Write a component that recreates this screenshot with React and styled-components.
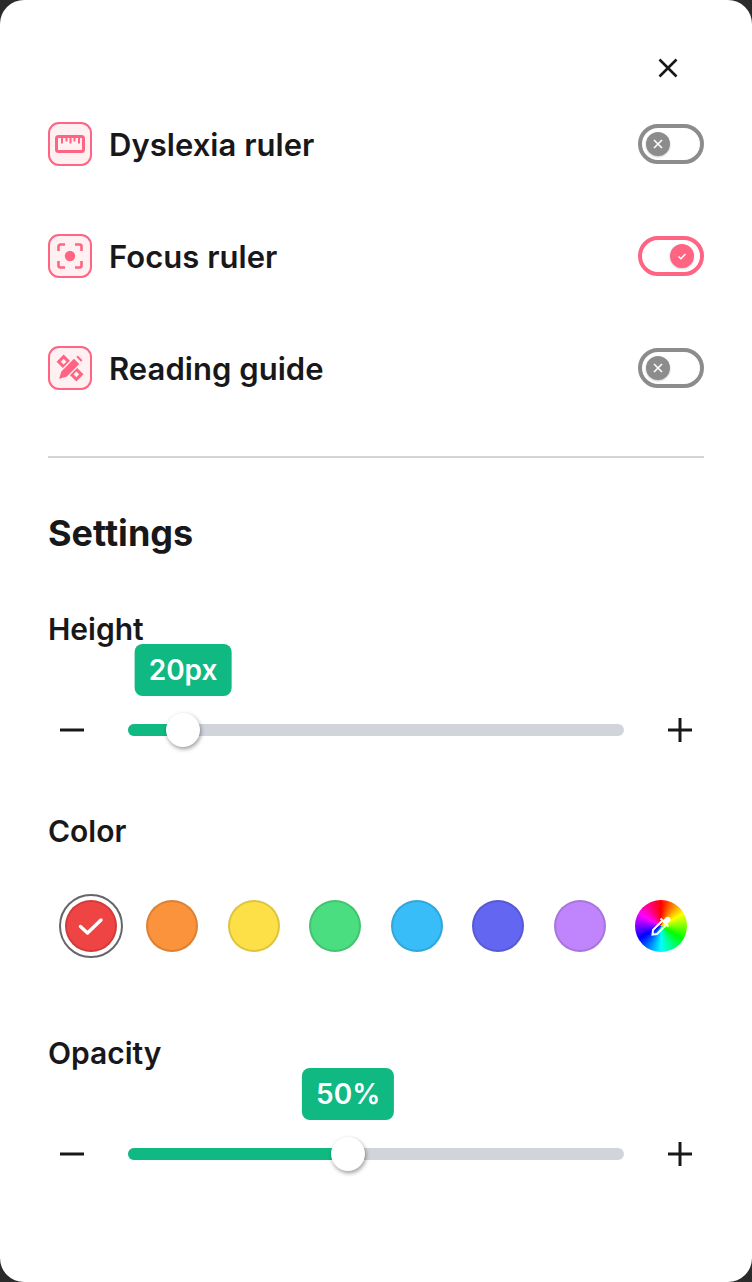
import React from 'react'
import styled, { createGlobalStyle } from 'styled-components'

const Global = createGlobalStyle`
  html, body {
    margin: 0;
    padding: 0;
    background: #2b2b2b;
  }
  body {
    font-family: Inter, "Liberation Sans", sans-serif;
    color: #18181b;
  }
`

const Panel = styled.div`
  width: 752px;
  height: 1282px;
  box-sizing: border-box;
  background: #fff;
  border-radius: 24px;
  padding: 44px 48px 0;
  overflow: hidden;
`

const CloseRow = styled.div`
  display: flex;
  justify-content: flex-end;
  height: 44px;
  padding-right: 14px;
`

const CloseButton = styled.button`
  width: 44px;
  height: 48px;
  padding: 0;
  border: 0;
  background: none;
  display: flex;
  align-items: center;
  justify-content: center;
  color: #18181b;
`

const FeatureRow = styled.div`
  height: 112px;
  display: flex;
  align-items: center;
`

const IconBox = styled.div`
  width: 44px;
  height: 44px;
  box-sizing: border-box;
  border: 2px solid #ff6482;
  border-radius: 11px;
  background: #fff0f2;
  color: #ff6482;
  display: flex;
  align-items: center;
  justify-content: center;
`

const FeatureLabel = styled.span`
  margin-left: 17px;
  flex: 1;
  font-size: 31px;
  font-weight: 600;
  letter-spacing: 0.04px;
`

const Toggle = styled.div`
  width: 66px;
  height: 40px;
  box-sizing: border-box;
  border: 4px solid ${p => (p.$on ? '#ff6482' : '#8c8c8c')};
  border-radius: 20px;
  padding: 4px 6px 4px 4px;
  background: #fff;
  display: flex;
  justify-content: ${p => (p.$on ? 'flex-end' : 'flex-start')};
`

const Knob = styled.div`
  width: 24px;
  height: 24px;
  border-radius: 50%;
  background: ${p => (p.$on ? '#ff6482' : '#8c8c8c')};
  box-shadow: 0 1px 2px rgba(0, 0, 0, 0.2);
  display: flex;
  align-items: center;
  justify-content: center;
  color: #fff;
`

const Divider = styled.hr`
  margin: 32px 0 0;
  border: 0;
  height: 2px;
  background: #d4d4d8;
`

const Heading = styled.h2`
  margin: 53px 0 0;
  font-size: 36px;
  line-height: 44px;
  font-weight: 700;
`

const SectionLabel = styled.div`
  margin-top: ${p => p.$top}px;
  font-size: 30px;
  line-height: 36px;
  font-weight: 600;
`

const SliderRow = styled.div`
  margin-top: 65px;
  height: 36px;
  display: flex;
  align-items: center;
  gap: 32px;
`

const StepButton = styled.button`
  width: 48px;
  height: 36px;
  padding: 0;
  border: 0;
  background: none;
  color: #18181b;
  display: flex;
  align-items: center;
  justify-content: center;
`

const Track = styled.div`
  position: relative;
  flex: 1;
  height: 12px;
  border-radius: 6px;
  background: #d1d5db;
`

const Fill = styled.div`
  height: 100%;
  border-radius: 6px;
  background: #10b981;
`

const Thumb = styled.div`
  position: absolute;
  top: -11px;
  width: 34px;
  height: 34px;
  margin-left: -17px;
  border-radius: 50%;
  background: #fff;
  box-shadow: 1px 2px 4px rgba(0, 0, 0, 0.4);
`

const Bubble = styled.div`
  position: absolute;
  bottom: 40px;
  transform: translateX(-50%);
  height: 52px;
  padding: 0 14px;
  border-radius: 8px;
  background: #10b981;
  color: #fff;
  font-size: 28px;
  font-weight: 600;
  line-height: 52px;
  white-space: nowrap;
`

const Swatches = styled.div`
  margin-top: 45px;
  padding: 0 17px;
  display: flex;
  justify-content: space-between;
  align-items: center;
  height: 64px;
`

const Swatch = styled.div`
  width: 52px;
  height: 52px;
  flex: none;
  position: relative;
  border-radius: 50%;
  box-sizing: border-box;
  background: ${p => p.$color};
  border: 2px solid rgba(0, 0, 0, 0.12);
  display: flex;
  align-items: center;
  justify-content: center;
  color: #fff;
  ${p => p.$selected && `
    &::after {
      content: '';
      position: absolute;
      inset: -8px;
      border: 2px solid #666;
      border-radius: 50%;
    }
  `}
`

const Wheel = styled.div`
  width: 52px;
  height: 52px;
  flex: none;
  border-radius: 50%;
  background: conic-gradient(#f00, #ff0 60deg, #0f0 120deg, #0ff 180deg, #00f 240deg, #f0f 300deg, #f00);
  display: flex;
  align-items: center;
  justify-content: center;
  color: #fff;
`

const CloseIcon = () => (
  <svg width="24" height="24" viewBox="0 0 24 24" fill="none" stroke="currentColor" strokeWidth="2.6">
    <path d="M3.5 3.5L20.5 20.5M20.5 3.5L3.5 20.5" />
  </svg>
)

const RulerIcon = () => (
  <svg width="30" height="18" viewBox="0 0 30 18" fill="none" stroke="currentColor" strokeWidth="3">
    <rect x="1.5" y="1.5" width="27" height="15" rx="2" />
    <path d="M7 1v7.5M11.5 1v5.5M15.5 1v7.5M19.5 1v5.5M24 1v7.5" strokeWidth="2" />
  </svg>
)

const FocusIcon = () => (
  <svg width="26" height="26" viewBox="0 0 26 26" fill="none" stroke="currentColor" strokeWidth="2.6">
    <path d="M8 1.5H3.5a2 2 0 0 0-2 2V8M18 1.5h4.5a2 2 0 0 1 2 2V8M8 24.5H3.5a2 2 0 0 1-2-2V18M18 24.5h4.5a2 2 0 0 0 2-2V18" />
    <circle cx="13" cy="13" r="5.2" fill="currentColor" stroke="none" />
  </svg>
)

// ruler runs top-left to bottom-right, pencil crosses it with its tip at bottom-left
const GuideIcon = () => (
  <svg width="28" height="28" viewBox="0 0 28 28">
    <g transform="rotate(-45 14 14)" fill="currentColor">
      <path fillRule="evenodd" d="M9 0h10v28H9z M12 3v4h4V3z M12 21v4h4v-4z" />
    </g>
    <g transform="rotate(45 14 14)" fill="currentColor" stroke="#fff0f2" strokeWidth="1.4">
      <path d="M10 -1h8v3.4h-8z" />
      <path d="M9.6 4h8.8v18.5L14 31 9.6 22.5z" />
    </g>
  </svg>
)

const CrossMark = () => (
  <svg width="12" height="12" viewBox="0 0 12 12" fill="none" stroke="currentColor" strokeWidth="1.6">
    <path d="M2 2l8 8M10 2l-8 8" />
  </svg>
)

const TickMark = () => (
  <svg width="12" height="12" viewBox="0 0 12 12" fill="none" stroke="currentColor" strokeWidth="1.5">
    <path d="M2.5 6.5l2.4 2.2L9.5 4" />
  </svg>
)

const MinusIcon = () => (
  <svg width="28" height="28" viewBox="0 0 28 28" fill="none" stroke="currentColor" strokeWidth="3">
    <path d="M2 14h24" />
  </svg>
)

const PlusIcon = () => (
  <svg width="28" height="28" viewBox="0 0 28 28" fill="none" stroke="currentColor" strokeWidth="3">
    <path d="M2 14h24M14 2v24" />
  </svg>
)

const BigTick = () => (
  <svg width="28" height="28" viewBox="0 0 28 28" fill="none" stroke="currentColor" strokeWidth="3.4" strokeLinecap="round" strokeLinejoin="round">
    <path d="M3.5 14.5l7 6.5L24 8" />
  </svg>
)

const DropperIcon = () => (
  <svg width="24" height="24" viewBox="0 0 24 24" fill="none" stroke="currentColor" strokeWidth="2">
    <path d="M13.5 6.5l4 4L8 20l-4.5.5L4 16z" />
    <path d="M11.5 4.5l8 8" />
    <path d="M15 7l3-3.2a1.9 1.9 0 0 1 2.4 2.6L17 9.5z" fill="currentColor" />
  </svg>
)

const features = [
  { label: 'Dyslexia ruler', icon: <RulerIcon />, on: false },
  { label: 'Focus ruler', icon: <FocusIcon />, on: true },
  { label: 'Reading guide', icon: <GuideIcon />, on: false },
]

const colors = ['#ef4444', '#fb923c', '#fde047', '#4ade80', '#38bdf8', '#6366f1', '#c084fc']

const Slider = ({ value, percent }) => (
  <SliderRow>
    <StepButton aria-label="Decrease"><MinusIcon /></StepButton>
    <Track>
      <Fill style={{ width: `${percent}%` }} />
      <Thumb style={{ left: `${percent}%` }} />
      <Bubble style={{ left: `${percent}%` }}>{value}</Bubble>
    </Track>
    <StepButton aria-label="Increase"><PlusIcon /></StepButton>
  </SliderRow>
)

export default function App() {
  return (
    <>
      <Global />
      <Panel>
        <CloseRow>
          <CloseButton aria-label="Close"><CloseIcon /></CloseButton>
        </CloseRow>
        {features.map(f => (
          <FeatureRow key={f.label}>
            <IconBox>{f.icon}</IconBox>
            <FeatureLabel>{f.label}</FeatureLabel>
            <Toggle $on={f.on}>
              <Knob $on={f.on}>{f.on ? <TickMark /> : <CrossMark />}</Knob>
            </Toggle>
          </FeatureRow>
        ))}
        <Divider />
        <Heading>Settings</Heading>
        <SectionLabel $top={56}>Height</SectionLabel>
        <Slider value="20px" percent={11.1} />
        <SectionLabel $top={65}>Color</SectionLabel>
        <Swatches>
          {colors.map((c, i) => (
            <Swatch key={c} $color={c} $selected={i === 0}>
              {i === 0 && <BigTick />}
            </Swatch>
          ))}
          <Wheel><DropperIcon /></Wheel>
        </Swatches>
        <SectionLabel $top={77}>Opacity</SectionLabel>
        <Slider value="50%" percent={44.4} />
      </Panel>
    </>
  )
}
